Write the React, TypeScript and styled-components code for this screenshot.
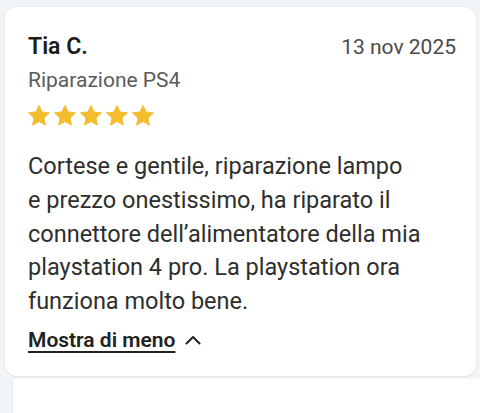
import React from "react";
import styled, { createGlobalStyle } from "styled-components";

const Global = createGlobalStyle`
  html, body { margin: 0; padding: 0; background: #f2f5f7; }
  body { font-family: Roboto, "Open Sans", sans-serif; -webkit-font-smoothing: antialiased; }
`;

const Page = styled.div`
  width: 480px;
  height: 413px;
  overflow: hidden;
  background: #f2f5f7;
  padding: 7px 4px 0 5px;
  box-sizing: border-box;
  display: flex;
  flex-direction: column;
  gap: 3px;
`;

const Card = styled.article`
  background: #ffffff;
  border-radius: 12px;
  box-shadow: 0 1px 2px rgba(0, 0, 0, 0.06), 0 0 0 1px rgba(0, 0, 0, 0.025);
  padding: 26px 20px 23px 23px;
  display: flex;
  flex-direction: column;
`;

const NextCard = styled.div`
  margin: 0 -4px 0 7px;
  flex: 1;
  border-left: 1px solid #eceff1;
  background: #ffffff;
`;

const Header = styled.div`
  display: flex;
  justify-content: space-between;
  align-items: baseline;
`;

const Name = styled.h3`
  margin: 0;
  font-size: 23px;
  font-weight: 600;
  color: #1c1c1c;
  line-height: 28px;
`;

const DateText = styled.span`
  font-size: 21px;
  color: #4a4a4a;
  line-height: 28px;
  margin-top: -2px;
`;

const Service = styled.div`
  margin-top: 6px;
  font-size: 21px;
  color: #5b5b5b;
  line-height: 26px;
`;

const Stars = styled.div`
  display: flex;
  gap: 2px;
  margin: 11px 0 0 -1px;
  height: 24px;
`;

const Body = styled.p`
  margin: 22px 0 0;
  font-size: 23.5px;
  line-height: 33.75px;
  color: #2e2e2e;
  white-space: nowrap;
`;

const Toggle = styled.button`
  margin-top: 8px;
  align-self: flex-start;
  display: flex;
  align-items: center;
  gap: 10px;
  border: 0;
  background: none;
  padding: 0;
  font-family: inherit;
  font-size: 21px;
  line-height: 26px;
  font-weight: 600;
  color: #222;
  cursor: pointer;
`;

const ToggleLabel = styled.span`
  text-decoration: underline;
  text-underline-offset: 4px;
  text-decoration-thickness: 1.5px;
`;

const Star = () => (
  <svg width="24" height="24" viewBox="0 0 24 24">
    <path
      d="M12 1.2l3.2 6.7 7.4.9-5.5 5.1 1.4 7.3L12 17.6l-6.5 3.6 1.4-7.3-5.5-5.1 7.4-.9z"
      fill="#f4bd2e"
      stroke="#f4bd2e"
      strokeWidth="0.8"
      strokeLinejoin="round"
    />
  </svg>
);

const Chevron = () => (
  <svg width="16" height="10" viewBox="0 0 16 10" fill="none">
    <path d="M1.5 8.5L8 2l6.5 6.5" stroke="#222" strokeWidth="2" strokeLinecap="round" strokeLinejoin="round" />
  </svg>
);

const lines = [
  "Cortese e gentile, riparazione lampo",
  "e prezzo onestissimo, ha riparato il",
  "connettore dell’alimentatore della mia",
  "playstation 4 pro. La playstation ora",
  "funziona molto bene.",
];

export default function App() {
  return (
    <>
      <Global />
      <Page>
        <Card>
          <Header>
            <Name>Tia C.</Name>
            <DateText>13 nov 2025</DateText>
          </Header>
          <Service>Riparazione PS4</Service>
          <Stars>
            {[0, 1, 2, 3, 4].map((i) => (
              <Star key={i} />
            ))}
          </Stars>
          <Body>
            {lines.map((l, i) => (
              <React.Fragment key={i}>
                {l}
                {i < lines.length - 1 && <br />}
              </React.Fragment>
            ))}
          </Body>
          <Toggle>
            <ToggleLabel>Mostra di meno</ToggleLabel>
            <Chevron />
          </Toggle>
        </Card>
        <NextCard />
      </Page>
    </>
  );
}
